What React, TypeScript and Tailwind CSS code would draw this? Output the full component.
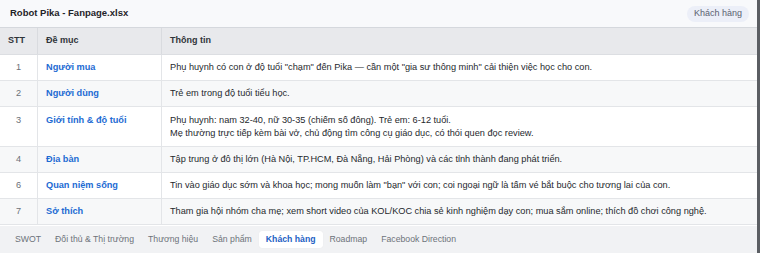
import React from 'react';

type Row = { stt: string; label: string; lines: string[] };

const rows: Row[] = [
    { stt: '1', label: 'Người mua', lines: ['Phụ huynh có con ở độ tuổi "chạm" đến Pika — cần một "gia sư thông minh" cải thiện việc học cho con.'] },
    { stt: '2', label: 'Người dùng', lines: ['Trẻ em trong độ tuổi tiểu học.'] },
    {
        stt: '3',
        label: 'Giới tính & độ tuổi',
        lines: [
            'Phụ huynh: nam 32-40, nữ 30-35 (chiếm số đông). Trẻ em: 6-12 tuổi.',
            'Mẹ thường trực tiếp kèm bài vở, chủ động tìm công cụ giáo dục, có thói quen đọc review.',
        ],
    },
    { stt: '4', label: 'Địa bàn', lines: ['Tập trung ở đô thị lớn (Hà Nội, TP.HCM, Đà Nẵng, Hải Phòng) và các tỉnh thành đang phát triển.'] },
    { stt: '6', label: 'Quan niệm sống', lines: ['Tin vào giáo dục sớm và khoa học; mong muốn làm "bạn" với con; coi ngoại ngữ là tấm vé bắt buộc cho tương lai của con.'] },
    { stt: '7', label: 'Sở thích', lines: ['Tham gia hội nhóm cha mẹ; xem short video của KOL/KOC chia sẻ kinh nghiệm dạy con; mua sắm online; thích đồ chơi công nghệ.'] },
];

const tabs = ['SWOT', 'Đối thủ & Thị trường', 'Thương hiệu', 'Sản phẩm', 'Khách hàng', 'Roadmap', 'Facebook Direction'];

export default function App() {
    return (
        <div className="w-[760px] h-[253px] overflow-hidden bg-white flex flex-col border-r-[3px] border-[#5b5e63] font-['Liberation_Sans',Arial,sans-serif]">
            {/* Sheet title bar */}
            <div className="h-[28px] flex items-center justify-between pl-[10px] pr-[8px] bg-[#f8f9fb] border-b border-[#d5d8dd]">
                <span className="text-[9.5px] font-bold text-[#1f2328]">Robot Pika - Fanpage.xlsx</span>
                <span className="h-[16px] flex items-center px-[7px] rounded-full bg-[#eceff8] text-[9px] text-[#5b6170]">Khách hàng</span>
            </div>

            {/* Table */}
            <div className="flex-1 flex flex-col">
                <div className="h-[27px] flex bg-[#e8e9ec] border-b border-[#dcdee2] text-[9px] font-bold text-[#30343a]">
                    <div className="w-[38px] flex items-center pl-[8px] border-r border-[#d9dbdf]">STT</div>
                    <div className="w-[124px] flex items-center pl-[8px] border-r border-[#d9dbdf]">Đề mục</div>
                    <div className="flex-1 flex items-center pl-[8px]">Thông tin</div>
                </div>
                {rows.map((row, i) => {
                    const pad = row.lines.length > 1 ? 'py-[6.5px]' : 'py-[6px]';
                    return (
                        <div key={row.stt} className={`flex border-b border-[#e3e5e8] ${i % 2 === 1 ? 'bg-[#f7f8f9]' : 'bg-white'}`}>
                            <div className={`w-[38px] ${pad} text-center text-[9.2px] leading-[13px] text-[#6b7078] border-r border-[#e3e5e8]`}>{row.stt}</div>
                            <div className={`w-[124px] ${pad} pl-[8px] text-[9.2px] leading-[13px] font-bold text-[#1d6bd3] border-r border-[#e3e5e8]`}>{row.label}</div>
                            <div className={`flex-1 ${pad} pl-[8px] text-[9.2px] leading-[13px] text-[#25282d]`}>
                                {row.lines.map((line) => (
                                    <div key={line}>{line}</div>
                                ))}
                            </div>
                        </div>
                    );
                })}
            </div>

            {/* Sheet tabs */}
            <div className="h-[27px] flex items-center pl-[8px] bg-[#f1f2f4]">
                {tabs.map((tab) =>
                    tab === 'Khách hàng' ? (
                        <span key={tab} className="h-[17px] flex items-center px-[7px] rounded-[3px] bg-white text-[8.7px] font-bold text-[#1d5fc4] shadow-[0_0_1px_rgba(0,0,0,0.08)]">
                            {tab}
                        </span>
                    ) : (
                        <span key={tab} className="h-[17px] flex items-center px-[7px] text-[8.7px] text-[#6d727a]">
                            {tab}
                        </span>
                    )
                )}
            </div>
        </div>
    );
}
